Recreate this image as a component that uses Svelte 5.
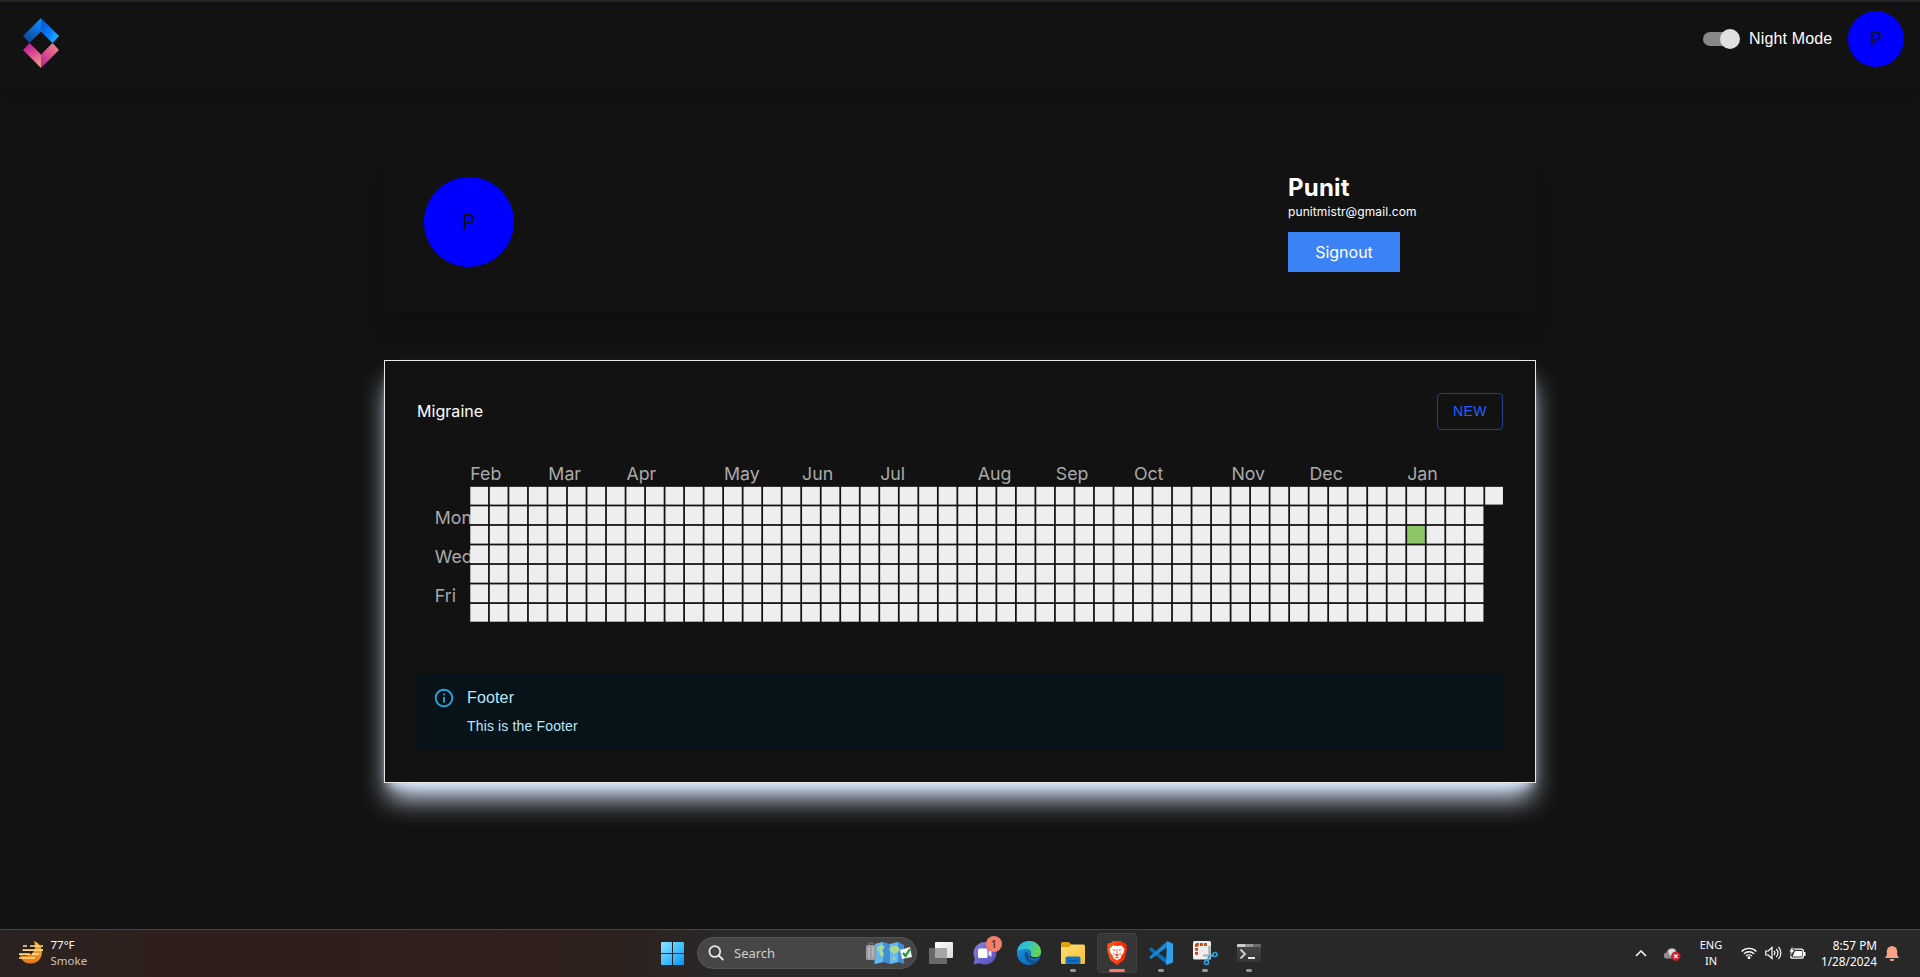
<script>
  const months = [
    [0, 'Feb'], [4, 'Mar'], [8, 'Apr'], [13, 'May'], [17, 'Jun'], [21, 'Jul'],
    [26, 'Aug'], [30, 'Sep'], [34, 'Oct'], [39, 'Nov'], [43, 'Dec'], [48, 'Jan']
  ];
  const weekdays = [[21, 'Mon'], [43, 'Wed'], [65, 'Fri']];
  const weeks = Array.from({ length: 53 }, (_, w) =>
    Array.from({ length: w === 52 ? 1 : 7 }, (_, d) => ({ d, filled: w === 48 && d === 2 }))
  );
</script>

<div class="screen">
  <div class="strip"></div>
  <header>
    <svg class="logo" width="36" height="50" viewBox="0 0 36 50">
      <defs>
        <linearGradient id="la" x1="0.8" y1="0" x2="0.3" y2="1"><stop offset="0" stop-color="#148bff" /><stop offset="1" stop-color="#084596" /></linearGradient>
        <linearGradient id="lb" x1="0" y1="0.1" x2="1" y2="0.9"><stop offset="0" stop-color="#0657c8" /><stop offset="0.55" stop-color="#0a7cff" /><stop offset="1" stop-color="#22c8f4" /></linearGradient>
        <linearGradient id="lc" x1="0.3" y1="0" x2="0.8" y2="1"><stop offset="0" stop-color="#b02093" /><stop offset="0.45" stop-color="#e04a96" /><stop offset="1" stop-color="#e6a184" /></linearGradient>
        <linearGradient id="ld" x1="0.9" y1="0" x2="0.1" y2="1"><stop offset="0" stop-color="#e38f86" /><stop offset="0.5" stop-color="#e0508e" /><stop offset="1" stop-color="#b32692" /></linearGradient>
      </defs>
      <path fill="url(#la)" d="M18 0v13.5L6.5 25 0 18z" />
      <path fill="url(#lb)" d="M18 0v13.5L29.5 25 36 18z" />
      <path fill="url(#lc)" d="M18 50V36.5L6.5 25 0 32z" />
      <path fill="url(#ld)" d="M18 50V36.5L29.5 25 36 32z" />
    </svg>
    <div class="tools">
      <span class="switch"><span class="thumb"></span></span>
      <span class="mode">Night Mode</span>
      <span class="avatar small">P</span>
    </div>
  </header>

  <main>
    <section class="profile">
      <span class="avatar large">P</span>
      <div class="who">
        <h1>Punit</h1>
        <p>punitmistr@gmail.com</p>
        <button class="signout">Signout</button>
      </div>
    </section>

    <section class="card">
      <div class="cardhead">
        <span class="title">Migraine</span>
        <button class="new">NEW</button>
      </div>
      <svg class="heatmap" viewBox="0 0 612 90">
        <g>
          {#each months as [w, name]}
            <text x={30 + w * 11} y="10">{name}</text>
          {/each}
        </g>
        <g transform="translate(10,14)">
          {#each weekdays as [y, name]}
            <text x="0" {y}>{name}</text>
          {/each}
        </g>
        <g transform="translate(30,14)">
          {#each weeks as week, w}
            <g transform="translate({w * 11},0)">
              {#each week as day}
                <rect width="10" height="10" y={day.d * 11} fill={day.filled ? '#8cc665' : '#eeeeee'} />
              {/each}
            </g>
          {/each}
        </g>
      </svg>
      <div class="alert">
        <svg width="22" height="22" viewBox="0 0 24 24"><path fill="#29b6f6" d="M11 7h2v2h-2zm0 4h2v6h-2zm1-9C6.480 2 2 6.480 2 12s4.480 10 10 10 10-4.480 10-10S17.520 2 12 2zm0 18c-4.410 0-8-3.590-8-8s3.590-8 8-8 8 3.590 8 8-3.590 8-8 8z" /></svg>
        <div>
          <div class="alerttitle">Footer</div>
          <div class="alerttext">This is the Footer</div>
        </div>
      </div>
    </section>
  </main>

  <footer>
    <div class="weather">
      <svg width="24" height="23" viewBox="0 0 24 23">
        <defs><linearGradient id="sun" x1="0" y1="0" x2="0" y2="1"><stop offset="0" stop-color="#f9b52e" /><stop offset="1" stop-color="#e8771a" /></linearGradient></defs>
        <path fill="url(#sun)" d="M15 0c5 2 8 6 8 11 0 7-5 11.500-11.500 11.500C6 22.500 2 19 1 14c5 2 15 0 15-8 0-2-.3-4-1-6z" />
        <path d="M4 5h4m3 0h13M3.500 9.200H24M0 13.200h11m2 0h7M0 17h16" stroke="#ffdc8b" stroke-width="1.700" />
      </svg>
      <div class="temp"><b>77°F</b><span>Smoke</span></div>
    </div>

    <div class="apps">
      <span class="slot">
        <svg width="24" height="24" viewBox="0 0 24 24">
          <defs><linearGradient id="win" x1="0" y1="0" x2="1" y2="1"><stop offset="0" stop-color="#8be4ff" /><stop offset="0.5" stop-color="#45c2ff" /><stop offset="1" stop-color="#0a93f8" /></linearGradient></defs>
          <path fill="url(#win)" d="M2 1h10v11H1V2a1 1 0 0 1 1-1zM13 1h10a1 1 0 0 1 1 1v10H13zM1 13h11v11H2a1 1 0 0 1-1-1zM13 13h11v10a1 1 0 0 1-1 1H13z" />
        </svg>
      </span>
      <div class="search">
        <svg width="16" height="16" viewBox="0 0 16 16" fill="none" stroke="#e6e6e6" stroke-width="1.800"><circle cx="6.800" cy="6.500" r="5.400" /><path d="M10.800 10.500l4 4" stroke-linecap="round" /></svg>
        <span>Search</span>
        <svg class="trip" width="47" height="24" viewBox="0 0 47 24">
          <path fill="#3e8ed3" d="M9 3l8-2 7 2 8-2 6 3v19l-6-2-8 2-7-2-9 2z" />
          <path fill="#67b6ec" d="M9 3l8-2v20l-8 2zM24 3l8-2v20l-8 2z" />
          <path fill="#a9d890" d="M12 5.500l4-2 3 3-3 2.500 2 4-1 3-3-2-1-4-2-1zM23 8l3-3 5 0 3 3-2 4-2-1-2 3-2-3-2-1zM27 16l3 1-1 2-3-1z" />
          <path d="M3 4V2h4v2" fill="none" stroke="#777" /><rect x="0" y="4" width="10" height="15" rx="1.500" fill="#9b9b9d" /><path d="M3 6v11M7 6v11" stroke="#c9c9cb" /><path d="M2 20h2m3 0h2" stroke="#55555a" />
          <path fill="#f3f1fa" d="M34 9l10-3 2 10-10 2z" /><path d="M37 12l2.500 3L44 8" fill="none" stroke="#1d9a24" stroke-width="2.200" />
        </svg>
      </div>
      <span class="slot">
        <svg width="24" height="22" viewBox="0 0 24 22"><defs><linearGradient id="tv" x1="0" y1="0" x2="1" y2="1"><stop offset="0" stop-color="#fff" /><stop offset="1" stop-color="#d9d9d9" /></linearGradient></defs><rect x="6" width="18" height="16" rx="1" fill="url(#tv)" /><rect y="6" width="18" height="16" rx="1" fill="#696969" /><path fill="#a5a5a5" d="M6 6h12v10H6z" /></svg>
      </span>
      <span class="slot">
        <svg width="24" height="24" viewBox="0 0 24 24"><defs><linearGradient id="chat" x1="0" y1="0" x2="1" y2="1"><stop offset="0" stop-color="#8c7fd8" /><stop offset="1" stop-color="#5350bd" /></linearGradient></defs><path fill="url(#chat)" d="M12 1a11.300 11.300 0 1 1-5.200 21.300L.5 23.500l1.300-6A11.300 11.300 0 0 1 12 1z" /><rect x="5" y="7.500" width="9.500" height="9.500" rx="1.500" fill="#fff" /><path fill="#e4e1f8" d="M15.500 10.500l3-2.500v8l-3-2z" /></svg>
        <span class="badge">1</span>
      </span>
      <span class="slot">
        <svg width="24" height="24" viewBox="0 0 24 24">
          <defs>
            <linearGradient id="e1" x1="0" y1="0" x2="1" y2="0.3"><stop offset="0" stop-color="#27b5e8" /><stop offset="0.5" stop-color="#32c4c6" /><stop offset="1" stop-color="#65d64d" /></linearGradient>
            <linearGradient id="e2" x1="0" y1="0" x2="1" y2="1"><stop offset="0" stop-color="#1b9de2" /><stop offset="1" stop-color="#0b5aab" /></linearGradient>
          </defs>
          <circle cx="12" cy="12" r="12" fill="url(#e2)" />
          <path fill="url(#e1)" d="M.3 10C1 4 6 0 12 0c7 0 12 5 12 10.500 0 4-3 6.500-6.500 6.500-3 0-5-1-4-2.500 1.500-2 1-6.500-4.500-6.500C5 8 1.500 9 .3 10z" />
          <path fill="#124f8c" d="M8.500 11c-2 3 0 10 6 11.500 3 .5 6-.8 7.500-3.500-5 2.500-11 0-10.500-5-.5-2-1.500-3.500-3-3z" />
          <path fill="#2a2a2a" d="M23.800 14c-1.500 3-5.500 4-9 3-2-.6-2.800-1.600-1.300-3.200 0 1.700 2 2.500 5 2.500 2.500 0 4.500-1 5.300-2.300zM23 17.500l1 1V14z" />
        </svg>
      </span>
      <span class="slot run">
        <svg width="24" height="22" viewBox="0 0 24 22"><defs><linearGradient id="fo" x1="0" y1="0" x2="1" y2="1"><stop offset="0" stop-color="#ffe17a" /><stop offset="1" stop-color="#fdbd2c" /></linearGradient></defs><path fill="#e0a010" d="M0 1.500Q0 0 1.500 0h6L10 2v6H0z" /><path fill="url(#fo)" d="M0 5h8l2-2.500h12.500a1.500 1.500 0 0 1 1.500 1.500v16.500a1.500 1.500 0 0 1-1.500 1.500h-21A1.500 1.500 0 0 1 0 20.500z" /><path fill="#1470c4" d="M4.500 22v-5.500a2 2 0 0 1 2-2h11a2 2 0 0 1 2 2V22z" /><path fill="#0a559e" d="M7.500 18h9v1.500h-9z" /></svg>
      </span>
      <span class="slot run active">
        <svg width="20" height="24" viewBox="0 0 20 24"><defs><linearGradient id="br" x1="0" y1="0" x2="1" y2="0"><stop offset="0" stop-color="#ff5a1c" /><stop offset="1" stop-color="#ff2100" /></linearGradient></defs><path fill="url(#br)" d="M6 0h8l2 2 2-.3L20 4.500l-.7 2L20 8l-2.500 9.500Q17 19 15.500 20L10 24l-5.500-4Q3 19 2.500 17.500L0 8l.7-1.500-.7-2L2 1.700 4 2z" /><path fill="#fff" d="M5.500 4.500L10 5l4.500-.5L17.500 8l-1 4-2.500 3 .2 1.500L10 19.500 5.800 16.500 6 15l-2.500-3-1-4z" /><path fill="#fb4722" d="M4.800 8.300l3.500.4-.8 1.300zM15.200 8.300l-3.500.4.8 1.300zM9.600 8h.8v5l2 1L10 15.300 7.600 14l2-1zM6 11.500l2 2-1.500.2zM14 11.500l-2 2 1.500.2zM8 16.500l2-.9 2 .9-2 1z" /></svg>
      </span>
      <span class="slot run">
        <svg width="24" height="24" viewBox="0 0 24 24"><path fill="#0a6db8" d="M0 8l2-1.800 16.500 12.300V24L.3 9z" /><path fill="#1788d8" d="M0 16.200L18.500 0v5.800L2 18z" /><path fill="#2ca2ef" d="M18 0l6 2.800v18.400L18 24l-1-1z" /></svg>
      </span>
      <span class="slot run">
        <svg width="25" height="24" viewBox="0 0 25 24"><rect width="18" height="18.500" rx="1.500" fill="#eeeeee" /><path d="M3 3.500h11.500M3.500 3v11" stroke="#d34410" stroke-width="3" stroke-dasharray="2.800 1.200" fill="none" /><path d="M16.500 5v10l-2 5M10 14.500h11" stroke="#9fabb5" stroke-width="2.200" fill="none" /><circle cx="13.500" cy="21.500" r="2" fill="none" stroke="#2aa4e4" stroke-width="1.600" /><circle cx="22" cy="13.500" r="2" fill="none" stroke="#2aa4e4" stroke-width="1.600" /><path d="M14.500 19.500l1.500-3.500 4-1.500" fill="none" stroke="#2aa4e4" stroke-width="1.500" /></svg>
      </span>
      <span class="slot run">
        <svg width="24" height="18" viewBox="0 0 24 18"><defs><linearGradient id="te" x1="0" y1="0" x2="0" y2="1"><stop offset="0" stop-color="#494949" /><stop offset="1" stop-color="#343434" /></linearGradient></defs><rect width="24" height="18" rx="1" fill="url(#te)" /><path fill="#ccc" d="M0 1q0-1 1-1h7v3H0z" /><path fill="#969696" d="M8 0h8v3H8z" /><path fill="#686868" d="M16 0h7q1 0 1 1v2h-8z" /><path d="M3.500 5.500L8 10l-4.500 4.500" fill="none" stroke="#ccc" stroke-width="2" /><path d="M11 14h7" stroke="#e8e8e8" stroke-width="2" /></svg>
      </span>
    </div>

    <div class="tray">
      <svg class="chev" width="12" height="7" viewBox="0 0 12 7"><path d="M1 6l5-5 5 5" fill="none" stroke="#fff" stroke-width="1.500" /></svg>
      <svg class="cloud" width="17" height="14" viewBox="0 0 17 14"><path fill="#8d8d8d" d="M3 11.500a3 3 0 0 1-.5-6A5.500 5.500 0 0 1 12 3l1 8.500z" /><path fill="#dedede" d="M4 4a5 5 0 0 1 8 0L6 9z" /><circle cx="11.800" cy="9.300" r="4.700" fill="#d31e2a" /><path d="M10 7.500l3.600 3.600m0-3.600L10 11.100" stroke="#fff" stroke-width="1.300" /></svg>
      <div class="lang"><span>ENG</span><span>IN</span></div>
      <svg class="wifi" width="16" height="12" viewBox="0 0 16 12" fill="none" stroke="#fff" stroke-width="1.300"><path d="M.6 4.500a10.500 10.500 0 0 1 14.800 0M2.800 6.900a7.400 7.400 0 0 1 10.400 0M5 9.100a4.300 4.300 0 0 1 6 0" /><circle cx="8" cy="10.700" r=".8" fill="#fff" /></svg>
      <svg class="vol" width="17" height="14" viewBox="0 0 17 14" fill="none" stroke="#fff" stroke-width="1.200"><path d="M.8 5h2.500L7 1.500v11L3.300 9H.8zM9 5a3 3 0 0 1 0 4M11.200 3a5.500 5.500 0 0 1 0 8M13.400 1a8.500 8.500 0 0 1 0 12" /></svg>
      <svg class="bat" width="17" height="14" viewBox="0 0 17 14"><rect x="1.700" y="3.200" width="12.600" height="9" rx="2" fill="none" stroke="#fff" stroke-width="1.300" /><path fill="#fff" d="M6 5h7v5.500H3.500zM15 6h1.500v4H15z" /><path fill="#fff" stroke="#282828" stroke-width=".7" d="M3.500 0L0 6h2l-1 4 5-6H4z" /></svg>
      <div class="clock"><span>8:57 PM</span><span>1/28/2024</span></div>
      <svg class="bell" width="14" height="15" viewBox="0 0 14 15" fill="#f9a184"><path d="M7 0a5.200 5.200 0 0 1 5.200 5.200V9L14 12H0l1.800-3V5.200A5.200 5.200 0 0 1 7 0zM4.800 13h4.400a2.200 2.200 0 0 1-4.400 0z" /></svg>
    </div>
  </footer>
</div>

<style>
  :global(body) { background: #121212; overflow: hidden; }
  .screen { width: 1920px; height: 977px; display: flex; flex-direction: column; background: #121212; color: #fff; font-family: Inter, sans-serif; overflow: hidden; }
  .screen :global(*) { box-sizing: border-box; }
  svg { display: block; flex: none; }
  .strip { height: 2px; background: #23272b; flex: none; }
  header { height: 82px; flex: none; display: flex; justify-content: space-between; align-items: flex-start; padding: 0 16px 0 23px; background: #121212; box-shadow: 0 10px 15px -3px rgb(0 0 0 / .07), 0 4px 6px -4px rgb(0 0 0 / .05); }
  .logo { margin-top: 16px; }
  .tools { display: flex; align-items: center; margin-top: 9px; font-family: "Liberation Sans", Arial, sans-serif; }
  .switch { width: 37px; height: 20px; display: flex; align-items: center; justify-content: flex-end; }
  .switch::before { content: ''; width: 34px; height: 14px; border-radius: 7px; background: #888; margin-right: -17px; flex: none; }
  .thumb { width: 20px; height: 20px; border-radius: 50%; background: #e0e0e0; flex: none; z-index: 1; }
  .mode { font-size: 16px; line-height: 24px; letter-spacing: .15px; margin-left: 9px; margin-right: 16px; width: 83px; white-space: nowrap; }
  .avatar { display: flex; align-items: center; justify-content: center; border-radius: 50%; background: #0000ff; color: #121212; font-family: Inter, sans-serif; font-size: 20px; line-height: 1; }
  .avatar.small { width: 56px; height: 56px; }
  .avatar.large { width: 90px; height: 90px; margin: 17px 0 0 40px; }

  main { flex: 1; display: flex; flex-direction: column; align-items: center; padding-top: 76px; }
  .profile { width: 1152px; height: 152px; display: flex; justify-content: space-between; align-items: flex-start; box-shadow: 0 20px 25px -5px rgb(0 0 0 / .1), 0 8px 10px -6px rgb(0 0 0 / .1); background: #121212; }
  .who { width: 248px; padding-top: 12px; }
  h1 { margin: 0; font-size: 24px; line-height: 32px; font-weight: 700; letter-spacing: .2px; }
  p { margin: 0; font-size: 12px; line-height: 16px; letter-spacing: .1px; }
  button { font: inherit; }
  .signout { display: block; width: 112px; height: 40px; margin-top: 12px; padding: 0; border: 0; background: #3b82f6; color: #fff; font-size: 16px; line-height: 24px; }
  .card { width: 1152px; height: 423px; margin-top: 48px; padding: 32px; border: 1px solid #e5e7eb; background: #121212; box-shadow: 0 20px 25px -5px #dbeafe, 0 8px 10px -6px #dbeafe; }
  .cardhead { display: flex; justify-content: space-between; align-items: center; height: 37px; font-size: 16px; }
  .title { padding-bottom: 2px; letter-spacing: .05px; }
  .new { width: 66px; height: 37px; border: 1px solid #194290; border-radius: 4px; background: none; color: #1f60ff; font-family: "Liberation Sans", Arial, sans-serif; font-size: 14px; letter-spacing: .4px; padding: 0 0 2px; }
  .heatmap { width: 1086px; height: 159.7px; margin-top: 32px; }
  .heatmap text { font-size: 10px; fill: #aaa; }
  .alert { display: flex; margin-top: 52px; height: 76px; padding: 6px 16px; border-radius: 4px; background: #071318; color: #b8e7fb; font-family: "Liberation Sans", Arial, sans-serif; }
  .alert svg { margin: 7px 12px 0 0; opacity: .9; }
  .alerttitle { font-size: 16px; line-height: 24px; letter-spacing: .15px; margin: 6px 0 6.300px; }
  .alerttext { font-size: 14px; line-height: 20px; letter-spacing: .15px; }

  footer { height: 48px; flex: none; display: grid; grid-template-columns: 650px 621px 1fr; border-top: 1px solid #464544; background: linear-gradient(90deg, #2a2321 0, #2e1f1c 160px, #2e201c 600px, #282828 720px, #282828 100%); font-family: "Noto Sans", "Open Sans", sans-serif; font-size: 11px; color: #fff; }
  .weather { display: flex; padding: 10px 0 0 19px; gap: 7.500px; align-items: flex-start; }
  .weather svg { margin-top: 1px; }
  .temp, .lang, .clock { display: flex; flex-direction: column; line-height: 16px; }
  .temp { margin-top: -3px; font-size: 11.500px; }
  .temp b { font-weight: 400; }
  .temp span { color: #c9c5c4; }
  .apps { display: flex; align-items: center; height: 46px; }
  .slot { width: 44px; height: 46px; display: flex; align-items: center; justify-content: center; position: relative; flex: none; }
  .run::after { content: ''; position: absolute; bottom: 4px; left: 19px; width: 6px; height: 3px; border-radius: 2px; background: #9a9a9a; }
  .active { width: 40px; height: 40px; margin: 0 2px; background: #373737; border: 1px solid #414141; border-radius: 4px; }
  .active::after { width: 16px; left: 11px; bottom: 0; background: #f47c62; }
  .badge { position: absolute; left: 23px; top: 6px; width: 16px; height: 16px; border-radius: 50%; background: #f57f66; color: #271915; text-align: center; font-size: 11px; line-height: 16px; }
  .search { width: 220px; height: 32px; margin: 0 2px 0 3px; padding: 0 3px 0 10px; display: flex; align-items: center; border-radius: 16px; background: #464646; border: 1px solid #555; font-size: 13px; color: #d0d0d0; flex: none; }
  .search span { margin-left: 10px; }
  .trip { margin-left: auto; }
  .tray { display: flex; align-items: center; height: 46px; padding-left: 364px; }
  .cloud { margin-left: 17px; margin-top: 1px; }
  .lang { width: 26px; margin-left: 17px; text-align: center; align-items: center; }
  .wifi { margin-left: 17px; }
  .vol { margin-left: 8px; }
  .bat { margin-left: 7px; }
  .clock { width: 60px; margin-left: 11px; align-items: flex-end; font-size: 11.800px; }
  .bell { margin-left: 8px; }
</style>
